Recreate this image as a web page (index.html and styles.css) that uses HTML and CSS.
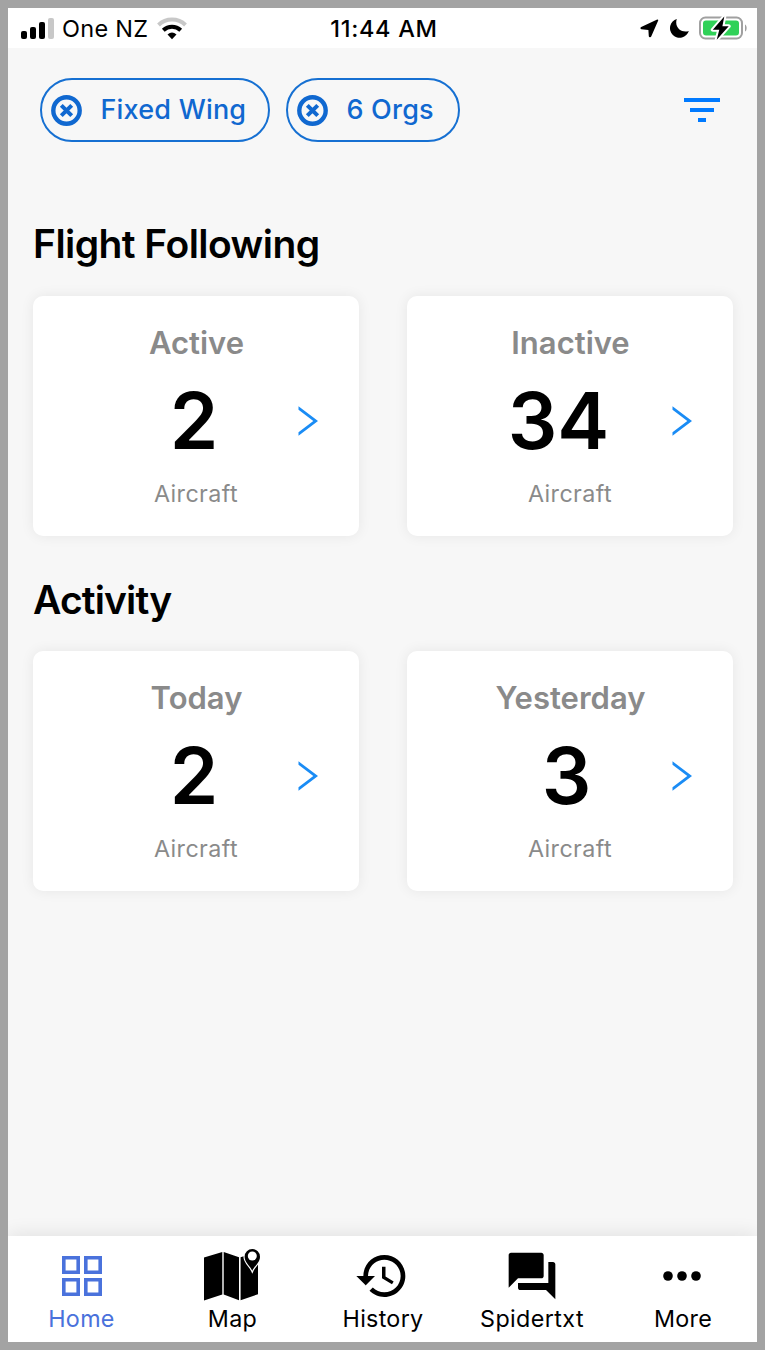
FILE: index.html
```html
<!DOCTYPE html>
<html lang="en">
<head>
<meta charset="utf-8">
<title>Flight Following</title>
<link rel="stylesheet" href="styles.css">
</head>
<body>
<div class="screen">
  <header class="status">
    <div class="status-left">
      <svg class="signal" width="34" height="22" viewBox="0 0 34 22"><rect x="0" y="14" width="6" height="8" rx="2"/><rect x="9" y="10" width="6" height="12" rx="2"/><rect x="18" y="5" width="6" height="17" rx="2"/><rect x="27" y="1" width="6" height="21" rx="2" fill="#c8c8c8"/></svg>
      <span class="carrier">One NZ</span>
      <svg width="30" height="23" viewBox="0 0 30 23" fill="none"><path d="M1.500 8A19.500 19.500 0 0 1 28.500 8" stroke="#c8c8c8" stroke-width="4"/><path d="M6.300 13.200A12.600 12.600 0 0 1 23.700 13.200" stroke="#000" stroke-width="4"/><path d="M10.500 17.400Q15 13.600 19.500 17.400L15 22.200Z" fill="#000"/></svg>
    </div>
    <span class="time">11:44 AM</span>
    <div class="status-right">
      <svg width="19" height="19" viewBox="0 0 19 19"><path d="M17.200.6a.8.8 0 0 1 1 1L11.200 17.600a1.300 1.300 0 0 1-2.400-.3L8.400 11 1.500 10.200a1.200 1.200 0 0 1-.3-2.300Z"/></svg>
      <svg class="moon" width="20" height="20" viewBox="0 0 20 20"><path d="M6.800 1A9.600 9.600 0 1 0 18.800 12.900C13 15.500 3.800 10.500 6.800 1Z"/></svg>
      <svg class="battery" width="49" height="26" viewBox="0 0 49 26"><rect x="1" y="2.500" width="42" height="21" rx="5.500" fill="#fff" stroke="#a0a0a0" stroke-width="2"/><rect x="4" y="5.500" width="36" height="15" rx="3" fill="#30d158"/><path d="M46 9.500c2.200 1 2.200 6 0 7Z" fill="#a0a0a0"/><path d="M25.300 1.500 13.800 14.700H20.300L17.700 24.700 29.700 11.200H23.400Z" fill="#000" stroke="#fff" stroke-width="4" stroke-linejoin="round" paint-order="stroke"/></svg>
    </div>
  </header>

  <section class="filters">
    <button class="chip chip-wide">
      <svg width="31" height="31" viewBox="0 0 31 31" fill="none" stroke="currentColor"><circle cx="15.500" cy="15.500" r="13.200" stroke-width="4.400"/><path d="m10.300 10.300 10.400 10.400M20.700 10.300 10.300 20.700" stroke-width="4"/></svg>
      <span>Fixed Wing</span>
    </button>
    <button class="chip">
      <svg width="31" height="31" viewBox="0 0 31 31" fill="none" stroke="currentColor"><circle cx="15.500" cy="15.500" r="13.200" stroke-width="4.400"/><path d="m10.300 10.300 10.400 10.400M20.700 10.300 10.300 20.700" stroke-width="4"/></svg>
      <span>6 Orgs</span>
    </button>
    <svg class="filter-icon" width="36" height="24" viewBox="0 0 36 24"><path d="M0 0h36v4H0zM6 10h24v4H6zM14 20h8v4h-8z"/></svg>
  </section>

  <main class="content">
    <h2>Flight Following</h2>
    <div class="cards">
      <article class="card">
        <h3>Active</h3>
        <div class="row"><span class="value">2</span><svg class="chevron" width="22" height="32" viewBox="0 0 22 32"><path d="M2.500 1.300 22 16 2.500 30.700V27.200L17.300 16 2.500 4.800Z"/></svg></div>
        <p>Aircraft</p>
      </article>
      <article class="card">
        <h3>Inactive</h3>
        <div class="row"><span class="value value-wide">34</span><svg class="chevron" width="22" height="32" viewBox="0 0 22 32"><path d="M2.500 1.300 22 16 2.500 30.700V27.200L17.300 16 2.500 4.800Z"/></svg></div>
        <p>Aircraft</p>
      </article>
    </div>
    <h2 class="second">Activity</h2>
    <div class="cards">
      <article class="card">
        <h3>Today</h3>
        <div class="row"><span class="value">2</span><svg class="chevron" width="22" height="32" viewBox="0 0 22 32"><path d="M2.500 1.300 22 16 2.500 30.700V27.200L17.300 16 2.500 4.800Z"/></svg></div>
        <p>Aircraft</p>
      </article>
      <article class="card">
        <h3>Yesterday</h3>
        <div class="row"><span class="value value-three">3</span><svg class="chevron" width="22" height="32" viewBox="0 0 22 32"><path d="M2.500 1.300 22 16 2.500 30.700V27.200L17.300 16 2.500 4.800Z"/></svg></div>
        <p>Aircraft</p>
      </article>
    </div>
  </main>

  <nav class="tabs">
    <a class="tab current">
      <svg width="56" height="56" viewBox="0 0 56 56" fill="none" stroke="currentColor" stroke-width="3.600"><path d="M9.800 9.800h14.400v14.400H9.800zM31.800 9.800h14.400v14.400H31.800zM9.800 31.800h14.400v14.400H9.800zM31.800 31.800h14.400v14.400H31.800z"/></svg>
      <span>Home</span>
    </a>
    <a class="tab">
      <svg width="56" height="56" viewBox="0 0 56 56"><path d="M0 9.500 18.300 4v42.500L0 52.600zM19.700 4 35 9.200v43L19.700 46.500zM36.600 9.200 42 7.500 54 14v32.200l-17.400 6z"/><path d="M48.300 22.700C46.500 18.500 40.600 14.500 40.600 8.700a7.700 7.700 0 0 1 15.400 0C56 14.500 50.100 18.500 48.300 22.700Z" stroke="#fff" stroke-width="2.400" paint-order="stroke"/><circle cx="48.300" cy="8" r="4.500" fill="#fff"/></svg>
      <span class="nudge">Map</span>
    </a>
    <a class="tab">
      <svg width="56" height="56" viewBox="0 0 24 24"><path d="M13 3c-4.970 0-9 4.030-9 9H1l3.890 3.890.07.14L9 12H6c0-3.870 3.130-7 7-7s7 3.130 7 7-3.130 7-7 7c-1.930 0-3.680-.79-4.940-2.060l-1.420 1.420C8.270 19.990 10.510 21 13 21c4.970 0 9-4.030 9-9s-4.030-9-9-9zm-1 5v5l4.280 2.540.72-1.210-3.500-2.080V8H12z"/></svg>
      <span class="nudge">History</span>
    </a>
    <a class="tab">
      <svg width="56" height="56" viewBox="0 0 24 24"><path d="M21 6h-2v9H6v2c0 .55.45 1 1 1h11l4 4V7c0-.55-.45-1-1-1zm-4 6V3c0-.55-.45-1-1-1H3c-.55 0-1 .45-1 1v14l4-4h10c.55 0 1-.45 1-1z"/></svg>
      <span class="wide">Spidertxt</span>
    </a>
    <a class="tab">
      <svg width="56" height="56" viewBox="0 0 56 56"><circle cx="14" cy="28" r="4.800"/><circle cx="28" cy="28" r="4.800"/><circle cx="42" cy="28" r="4.800"/></svg>
      <span class="nudge">More</span>
    </a>
  </nav>
</div>
</body>
</html>
```
FILE: styles.css
```css
* { box-sizing: border-box; margin: 0; padding: 0; }
body { font-family: Inter, "Liberation Sans", sans-serif; color: #000; }
svg { display: block; flex: none; }

.screen {
  width: 765px; height: 1350px;
  border: 8px solid #a3a3a3;
  background: #f7f7f7;
  display: flex; flex-direction: column;
  overflow: hidden;
}

.status {
  height: 40px; background: #fff; flex: none;
  display: grid; grid-template-columns: 1fr auto 1fr; align-items: center;
  padding: 0 9px 0 13px;
}
.status-left, .status-right { display: flex; align-items: center; }
.status-right { justify-content: flex-end; }
.signal { margin-bottom: 1px; }
.carrier { font-size: 23.5px; letter-spacing: .3px; margin: 0 9px 0 7px; padding-top: 2px; line-height: 38px; }
.time { font-size: 23.5px; font-weight: 500; letter-spacing: .7px; line-height: 38px; padding: 2px 1px 0 0; }
.moon { margin-left: 11px; }
.battery { margin-left: 9px; }

.filters { display: flex; gap: 16px; padding: 30px 37px 0 32px; height: 160px; flex: none; }
.chip {
  height: 64px; width: 174px; padding-left: 8.500px;
  display: flex; align-items: center; gap: 19px;
  border: 2px solid #1670d2; border-radius: 32px; background: none;
  font: 500 27px/60px Inter, sans-serif; letter-spacing: .2px; color: #1068d0; white-space: nowrap;
}
.chip-wide { width: 230px; }
.filter-icon { margin: 20px 0 0 auto; fill: #007aff; }

.content { padding: 0 24px 0 25px; flex: 1; }
h2 { font-size: 39px; font-weight: 600; letter-spacing: -.55px; line-height: 48px; height: 88px; padding-top: 12px; white-space: nowrap; }
h2.second { height: 115px; padding-top: 40px; letter-spacing: -.85px; }
.cards { display: flex; gap: 48px; }
.card {
  width: 326px; height: 240px; padding-top: 27px;
  background: #fff; border-radius: 10px;
  box-shadow: 0 0 14px rgba(0, 0, 0, .07);
  text-align: center;
}
.card h3 { font-size: 31px; font-weight: 600; line-height: 40px; padding-left: 1px; color: #8a8a8a; }
.row { display: grid; grid-template-columns: 1fr 63px; align-items: center; height: 116px; }
.value { grid-area: 1 / 1 / 2 / 3; font-size: 78px; font-weight: 600; line-height: 116px; padding-right: 4px; }
.value-three { padding-right: 7px; }
.value-wide { padding-right: 23px; }
.chevron { grid-area: 1 / 2; fill: #1a8cf5; }
.card p { font-size: 23.3px; line-height: 30px; letter-spacing: .4px; color: #8a8a8a; }

.tabs {
  height: 106px; flex: none; background: #fff;
  display: grid; grid-template-columns: 148px 151px 150px 150px 1fr;
  box-shadow: 0 -2px 18px rgba(0, 0, 0, .09);
}
.tab { display: flex; flex-direction: column; align-items: center; padding-top: 12px; }
.tab span { font-size: 23.3px; line-height: 30px; letter-spacing: .3px; }
.tab span.wide { letter-spacing: .4px; }
.tab span.nudge { padding-left: 2px; }
.current { color: #4a72dc; padding-right: 1px; }
```
